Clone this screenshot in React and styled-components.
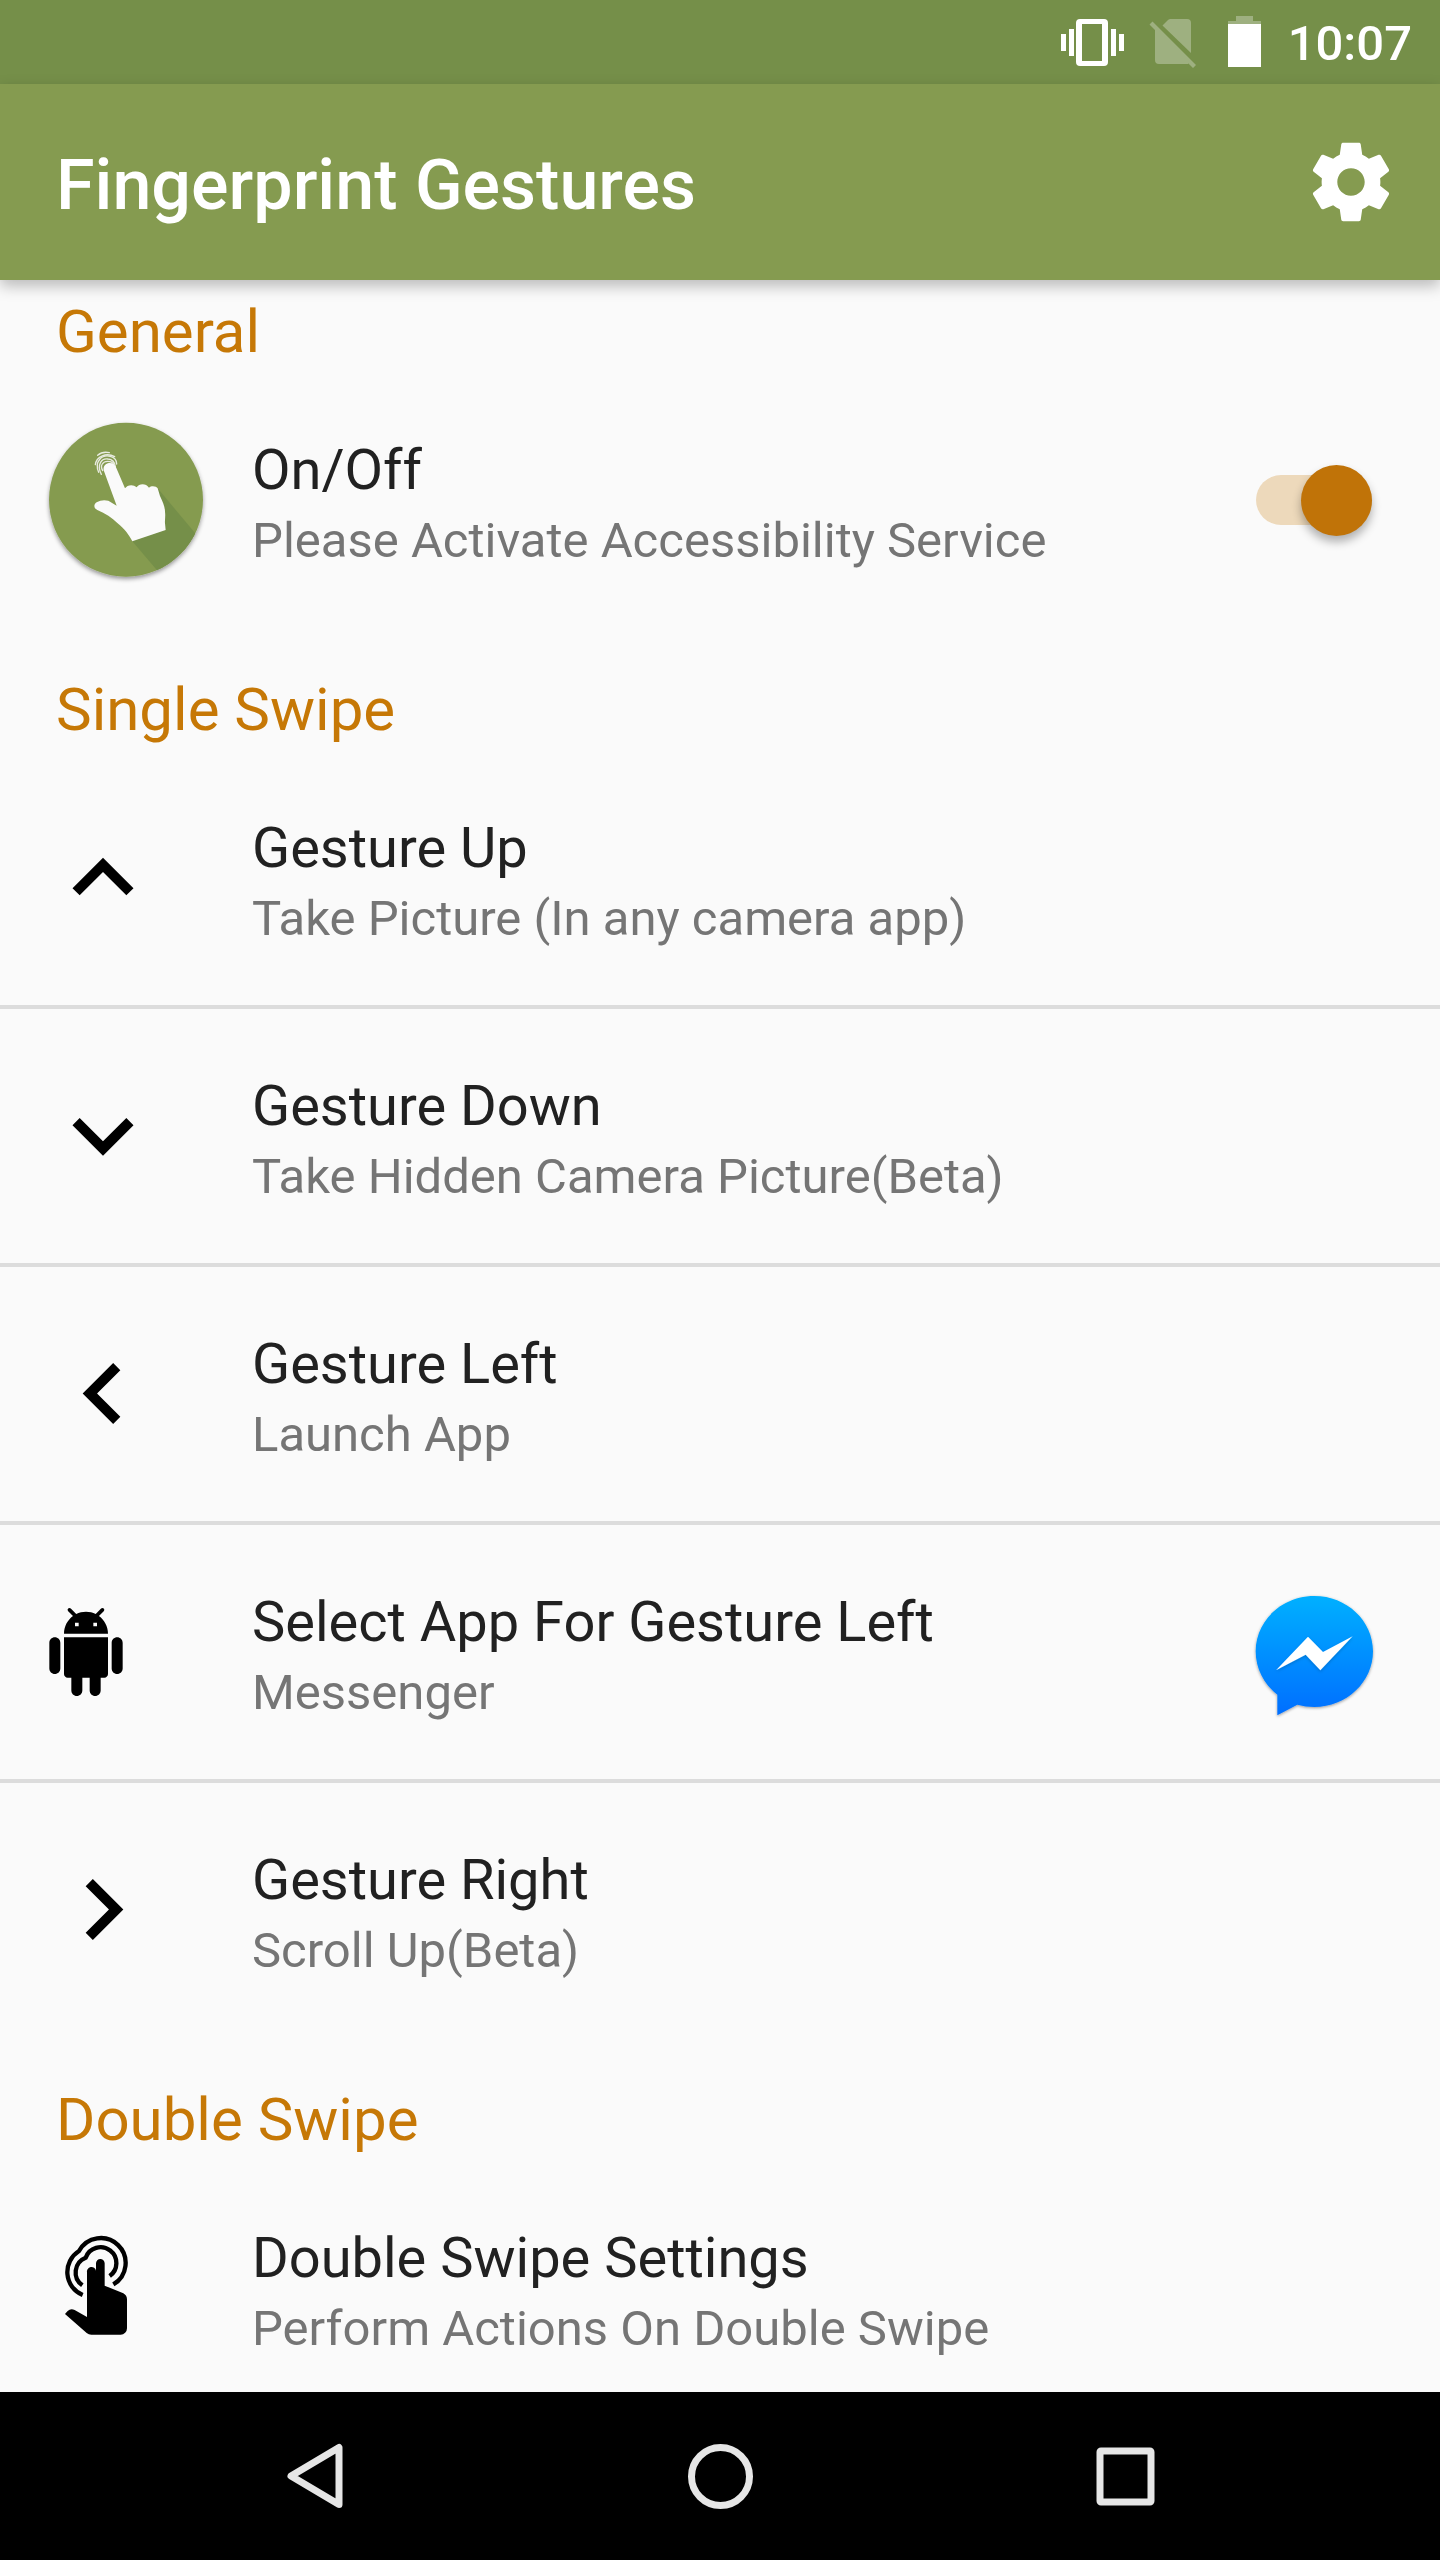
import { useState } from 'react';
import styled, { createGlobalStyle } from 'styled-components';

const GlobalStyle = createGlobalStyle`
  * {
    box-sizing: border-box;
    margin: 0;
    padding: 0;
  }

  body {
    background: #fafafa;
    font-family: Roboto, 'Liberation Sans', sans-serif;
  }
`;

const StyledScreen = styled.div`
  display: flex;
  flex-direction: column;
  width: 100%;
  height: 100vh;
  background: #fafafa;
`;

const StyledStatusBar = styled.div`
  display: flex;
  flex-shrink: 0;
  align-items: center;
  justify-content: flex-end;
  height: 84px;
  padding-right: 28px;
  background: #758f49;
`;

const StyledStatusIcon = styled.svg`
  width: ${({ $width }) => $width}px;
  height: 52px;
  margin-right: ${({ $gap }) => $gap}px;
  fill: #fff;
`;

const StyledClock = styled.time`
  padding-top: 4px;
  font-weight: 500;
  font-size: 49px;
  line-height: 60px;
  color: #fff;
`;

const StyledAppBar = styled.header`
  position: relative;
  z-index: 1;
  display: flex;
  flex-shrink: 0;
  align-items: center;
  justify-content: space-between;
  height: 196px;
  padding: 0 42px 0 56px;
  background: #859b50;
  box-shadow: 0 6px 14px rgba(0, 0, 0, 0.26);
`;

const StyledTitle = styled.h1`
  padding-top: 6px;
  font-weight: 500;
  font-size: 70px;
  line-height: 84px;
  color: #fff;
`;

const StyledIconButton = styled.button`
  display: flex;
  border: none;
  background: none;
  cursor: pointer;

  svg {
    width: 94px;
    height: 94px;
    fill: #fff;
  }
`;

const StyledContent = styled.main`
  flex: 1;
  min-height: 0;
  overflow-y: auto;
  scrollbar-width: none;
`;

const StyledSectionTitle = styled.h2`
  padding: ${({ $first }) => ($first ? 16 : 47)}px 56px 5px;
  font-weight: 400;
  font-size: 60px;
  line-height: 72px;
  color: #c67806;
`;

const StyledList = styled.ul`
  list-style: none;
`;

const StyledListItem = styled.li`
  & + & {
    border-top: 4px solid #dcdcdc;
  }
`;

const StyledRow = styled.div`
  display: flex;
  align-items: center;
  width: 100%;
  min-height: 254px;
  padding: 0 58px 0 42px;
  border: none;
  background: none;
  font-family: inherit;
  text-align: left;
`;

const StyledIconSlot = styled.span`
  display: flex;
  flex-shrink: 0;
  align-items: center;
  width: 168px;
  margin-right: 42px;
`;

const StyledIcon = styled.svg`
  width: ${({ $size }) => $size}px;
  height: ${({ $size }) => $size}px;
`;

const StyledRowText = styled.span`
  display: flex;
  flex: 1;
  flex-direction: column;
`;

const StyledRowTitle = styled.span`
  font-size: 56px;
  line-height: 82px;
  color: #212121;
`;

const StyledSummary = styled.span`
  font-size: 49px;
  line-height: 60px;
  color: #757575;
`;

const StyledWidgetSlot = styled.span`
  display: flex;
  flex-shrink: 0;
  align-items: center;
  justify-content: center;
  width: 136px;
`;

const StyledSwitch = styled.input`
  appearance: none;
  display: flex;
  align-items: center;
  justify-content: ${({ checked }) => (checked ? 'flex-end' : 'flex-start')};
  width: 116px;
  height: 50px;
  border-radius: 25px;
  background: ${({ checked }) => (checked ? '#edd9bb' : '#b5b5b5')};
  cursor: pointer;

  &::before {
    content: '';
    width: 71px;
    height: 71px;
    border-radius: 50%;
    background: ${({ checked }) => (checked ? '#c07308' : '#f1f1f1')};
    box-shadow: 0 6px 10px rgba(0, 0, 0, 0.3);
  }
`;

const StyledNavBar = styled.nav`
  display: grid;
  flex-shrink: 0;
  grid-template-columns: repeat(3, 1fr);
  height: 168px;
  padding: 0 112px;
  background: #000;
`;

const StyledNavButton = styled.button`
  display: flex;
  align-items: center;
  justify-content: center;
  border: none;
  background: none;
  cursor: pointer;

  svg {
    width: 72px;
    height: 72px;
    fill: none;
    stroke: #e6e6e6;
    stroke-width: 7;
    stroke-linejoin: round;
  }
`;

const VibrateIcon = () => (
  <StyledStatusIcon $width={64} $gap={25} viewBox="0 0 64 52" aria-hidden="true">
    <rect x="1" y="18" width="5" height="17" />
    <rect x="9" y="13" width="5" height="27" />
    <path
      fillRule="evenodd"
      d="M20 3h24a4 4 0 0 1 4 4v39a4 4 0 0 1-4 4H20a4 4 0 0 1-4-4V7a4 4 0 0 1 4-4zm2 5v37h20V8z"
    />
    <rect x="51" y="13" width="5" height="27" />
    <rect x="59" y="18" width="5" height="17" />
  </StyledStatusIcon>
);

const NoSimIcon = () => (
  <StyledStatusIcon $width={48} $gap={31} viewBox="0 0 48 52" aria-hidden="true">
    <g fillOpacity="0.3">
      <path d="M13.500 9.500L19 4q1-1 2.500-1H38q4 0 4 4v30z" />
      <path d="M3.500 5.500L47 49l-3 3-4.500-4.500q-.7.500-1.500.500H10q-4 0-4-4V14L.5 8.500z" />
    </g>
  </StyledStatusIcon>
);

const BatteryIcon = () => (
  <StyledStatusIcon $width={33} $gap={27} viewBox="0 0 33 52" aria-hidden="true">
    <path fillOpacity="0.3" d="M8 0h17v5h8v3H0V5h8z" />
    <rect y="8" width="33" height="43" />
  </StyledStatusIcon>
);

const SettingsIcon = () => (
  <svg viewBox="0 0 24 24" aria-hidden="true">
    <path d="M19.43 12.98c.04-.32.07-.64.07-.98s-.03-.66-.07-.98l2.11-1.65c.19-.15.24-.42.12-.64l-2-3.46c-.12-.22-.39-.3-.61-.22l-2.49 1c-.52-.4-1.08-.73-1.69-.98l-.38-2.65C14.46 2.18 14.25 2 14 2h-4c-.25 0-.46.18-.49.42l-.38 2.65c-.61.25-1.17.59-1.69.98l-2.49-1c-.23-.09-.49 0-.61.22l-2 3.46c-.13.22-.07.49.12.64l2.11 1.65c-.04.32-.07.65-.07.98s.03.66.07.98l-2.11 1.65c-.19.15-.24.42-.12.64l2 3.46c.12.22.39.3.61.22l2.49-1c.52.4 1.08.73 1.69.98l.38 2.65c.03.24.24.42.49.42h4c.25 0 .46-.18.49-.42l.38-2.65c.61-.25 1.17-.59 1.69-.98l2.49 1c.23.09.49 0 .61-.22l2-3.46c.12-.22.07-.49-.12-.64l-2.11-1.65zM12 15.500c-1.930 0-3.500-1.570-3.500-3.500s1.570-3.500 3.500-3.500 3.500 1.570 3.500 3.500-1.570 3.500-3.500 3.500z" />
  </svg>
);

const FingerprintIcon = () => (
  <StyledIcon $size={168} viewBox="36 48 504 504" aria-hidden="true">
    <defs>
      <clipPath id="badge">
        <circle cx="288" cy="299" r="231" />
      </clipPath>
      <filter id="badge-shadow" x="-10%" y="-10%" width="120%" height="125%">
        <feDropShadow dx="0" dy="7" stdDeviation="6" floodOpacity="0.4" />
      </filter>
    </defs>
    <circle cx="288" cy="299" r="231" fill="#859b50" filter="url(#badge-shadow)" />
    <path clipPath="url(#badge)" fill="#758f49" d="M383 265L520 429 440 580 307 424z" />
    <path
      fill="#fafafa"
      d="M221 211C219 198 226 191 237 189C249 188 255 194 259 204L285 265C291 255 309 251 320 262C327 250 348 249 357 263C364 256 379 258 383 265L390 288C398 305 405 320 405 335C407 350 404 360 405 370L407 390L307 424C298 406 284 386 262 369C246 353 226 341 202 330C191 325 190 313 200 307C215 298 234 299 245 308L260 317z"
    />
    <g fill="none" stroke="#fafafa" strokeWidth="4" strokeLinecap="round" opacity="0.85">
      <path d="M203 166C212 158 225 155 238 158" />
      <path d="M196 194C199 168 230 157 254 170" />
      <path d="M206 217C192 184 216 163 241 169C253 172 260 181 260 192" />
      <path d="M214 223C199 194 215 174 234 177C247 178 254 185 256 200" />
      <path d="M218 212C209 196 219 184 233 184C243 184 249 188 251 193" />
    </g>
  </StyledIcon>
);

const chevrons = {
  up: 'M7.410 15.410L12 10.830l4.590 4.580L18 14l-6-6-6 6z',
  down: 'M7.410 8.460L12 13.040l4.590-4.580L18 9.870l-6 6-6-6z',
  left: 'M15.410 16.490l-4.580-4.590 4.580-4.590L14 5.900l-6 6 6 6z',
  right: 'M8.590 16.490l4.580-4.590-4.580-4.590L10 5.900l6 6-6 6z',
};

const ChevronIcon = ({ direction }) => (
  <StyledIcon $size={122} viewBox="0 0 24 24" aria-hidden="true">
    <path d={chevrons[direction]} />
  </StyledIcon>
);

const AndroidIcon = () => (
  <StyledIcon $size={88} viewBox="0 0 24 24" aria-hidden="true">
    <path d="M6 18c0 .55.45 1 1 1h1v3.500c0 .83.67 1.500 1.500 1.500s1.500-.67 1.500-1.500V19h2v3.500c0 .83.67 1.500 1.500 1.500s1.500-.67 1.500-1.500V19h1c.55 0 1-.45 1-1V8H6v10zM3.500 8C2.670 8 2 8.670 2 9.500v7c0 .83.67 1.500 1.500 1.500S5 17.330 5 16.500v-7C5 8.670 4.330 8 3.500 8zm17 0c-.83 0-1.500.67-1.500 1.500v7c0 .83.67 1.500 1.500 1.500s1.500-.67 1.500-1.500v-7c0-.83-.67-1.500-1.500-1.500zm-4.970-5.840l1.300-1.300c.2-.2.2-.51 0-.71-.2-.2-.51-.2-.71 0l-1.480 1.480C13.850 1.230 12.950 1 12 1c-.96 0-1.860.23-2.660.63L7.850.15c-.2-.2-.51-.2-.71 0-.2.2-.2.51 0 .71l1.310 1.310C6.970 3.260 6 5.010 6 7h12c0-1.990-.97-3.750-2.470-4.840zM10 5H9V4h1v1zm5 0h-1V4h1v1z" />
  </StyledIcon>
);

const DoubleTapIcon = () => (
  <StyledIcon $size={122} viewBox="36 1101 366 366" aria-hidden="true">
    <g fill="none" stroke="#000" strokeWidth="13">
      <path d="M250 1273A74.500 74.500 0 1 0 147 1173A74.500 74.500 0 0 0 158 1305" />
      <path d="M239 1248A47.500 47.500 0 1 0 167 1193A47.500 47.500 0 0 0 157 1276" />
    </g>
    <path d="M171 1371V1237A13.500 13.500 0 0 1 198 1232V1210A13 13 0 0 1 224 1210V1277L280 1300Q291 1306 291 1318V1405A19 19 0 0 1 272 1424H184Q176 1424 170 1419L105 1362L113 1353Q122 1344 134 1350z" />
  </StyledIcon>
);

const MessengerIcon = () => (
  <StyledIcon $size={136} viewBox="78 42 408 408" aria-hidden="true">
    <defs>
      <linearGradient id="bubble" x1="0" y1="0" x2="0" y2="1">
        <stop offset="0" stopColor="#00b0ff" />
        <stop offset="1" stopColor="#006eff" />
      </linearGradient>
      <filter id="bubble-shadow" x="-10%" y="-10%" width="120%" height="120%">
        <feDropShadow dx="0" dy="3" stdDeviation="4" floodOpacity="0.4" />
      </filter>
      <filter id="bolt-shadow" x="-10%" y="-20%" width="120%" height="150%">
        <feDropShadow dx="0" dy="4" stdDeviation="5" floodOpacity="0.2" />
      </filter>
    </defs>
    <path
      fill="url(#bubble)"
      filter="url(#bubble-shadow)"
      d="M283 78C380 78 459 152 459 244C459 336 380 411 283 411Q256 411 232 404L172 436V374C132 343 107 296 107 244C107 152 186 78 283 78z"
    />
    <path
      fill="#fff"
      filter="url(#bolt-shadow)"
      d="M168 301L264 200L309 246L398 199L301 301L257 254z"
    />
  </StyledIcon>
);

const sections = [
  {
    title: 'Single Swipe',
    rows: [
      {
        title: 'Gesture Up',
        summary: 'Take Picture (In any camera app)',
        icon: <ChevronIcon direction="up" />,
      },
      {
        title: 'Gesture Down',
        summary: 'Take Hidden Camera Picture(Beta)',
        icon: <ChevronIcon direction="down" />,
      },
      {
        title: 'Gesture Left',
        summary: 'Launch App',
        icon: <ChevronIcon direction="left" />,
      },
      {
        title: 'Select App For Gesture Left',
        summary: 'Messenger',
        icon: <AndroidIcon />,
        widget: <MessengerIcon />,
      },
      {
        title: 'Gesture Right',
        summary: 'Scroll Up(Beta)',
        icon: <ChevronIcon direction="right" />,
      },
    ],
  },
  {
    title: 'Double Swipe',
    rows: [
      {
        title: 'Double Swipe Settings',
        summary: 'Perform Actions On Double Swipe',
        icon: <DoubleTapIcon />,
      },
    ],
  },
];

const PreferenceRow = ({ icon, title, summary, widget }) => {
  return (
    <StyledListItem>
      <StyledRow as="button" type="button">
        <StyledIconSlot>{icon}</StyledIconSlot>
        <StyledRowText>
          <StyledRowTitle>{title}</StyledRowTitle>
          <StyledSummary>{summary}</StyledSummary>
        </StyledRowText>
        {widget && <StyledWidgetSlot>{widget}</StyledWidgetSlot>}
      </StyledRow>
    </StyledListItem>
  );
};

const App = () => {
  const [enabled, setEnabled] = useState(true);

  return (
    <>
      <GlobalStyle />
      <StyledScreen>
        <StyledStatusBar>
          <VibrateIcon />
          <NoSimIcon />
          <BatteryIcon />
          <StyledClock>10:07</StyledClock>
        </StyledStatusBar>
        <StyledAppBar>
          <StyledTitle>Fingerprint Gestures</StyledTitle>
          <StyledIconButton type="button" aria-label="Settings">
            <SettingsIcon />
          </StyledIconButton>
        </StyledAppBar>
        <StyledContent>
          <section>
            <StyledSectionTitle $first>General</StyledSectionTitle>
            <StyledRow>
              <StyledIconSlot>
                <FingerprintIcon />
              </StyledIconSlot>
              <StyledRowText>
                <StyledRowTitle as="label" htmlFor="service">
                  On/Off
                </StyledRowTitle>
                <StyledSummary>Please Activate Accessibility Service</StyledSummary>
              </StyledRowText>
              <StyledWidgetSlot>
                <StyledSwitch
                  id="service"
                  type="checkbox"
                  role="switch"
                  checked={enabled}
                  onChange={(e) => setEnabled(e.target.checked)}
                />
              </StyledWidgetSlot>
            </StyledRow>
          </section>
          {sections.map((section) => (
            <section key={section.title}>
              <StyledSectionTitle>{section.title}</StyledSectionTitle>
              <StyledList>
                {section.rows.map((row) => (
                  <PreferenceRow key={row.title} {...row} />
                ))}
              </StyledList>
            </section>
          ))}
        </StyledContent>
        <StyledNavBar>
          <StyledNavButton type="button" aria-label="Back">
            <svg viewBox="0 0 72 72">
              <path d="M60 7.500V64.500L12 36z" />
            </svg>
          </StyledNavButton>
          <StyledNavButton type="button" aria-label="Home">
            <svg viewBox="0 0 72 72">
              <circle cx="36.500" cy="36.500" r="29" />
            </svg>
          </StyledNavButton>
          <StyledNavButton type="button" aria-label="Recent apps">
            <svg viewBox="0 0 72 72">
              <rect x="11" y="11" width="51" height="51" rx="1" />
            </svg>
          </StyledNavButton>
        </StyledNavBar>
      </StyledScreen>
    </>
  );
};

export default App;
